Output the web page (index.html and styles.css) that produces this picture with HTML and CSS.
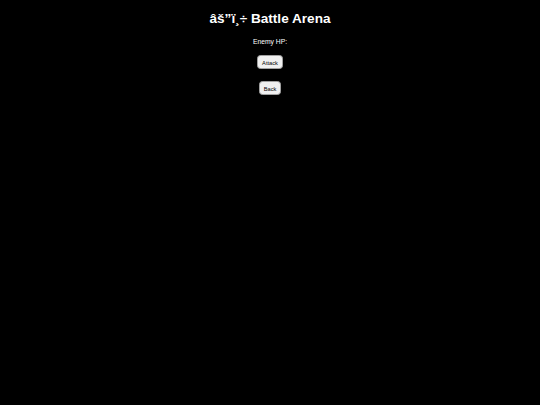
FILE: index.html
```html
<!DOCTYPE html>
<html>
<head>
<meta charset="utf-8">
<link rel="stylesheet" href="styles.css">
</head>
<body>
<main class="arena">
  <h1 class="title">âš”ï¸÷ Battle Arena</h1>
  <p class="hp">Enemy HP: </p>
  <button class="btn btn-attack">Attack</button>
  <button class="btn btn-back">Back</button>
</main>
</body>
</html>
```
FILE: styles.css
```css
html, body {
  margin: 0;
  padding: 0;
  background: #000;
  height: 100%;
}
.arena {
  display: flex;
  flex-direction: column;
  align-items: center;
  color: #fff;
  font-family: "Liberation Sans", Arial, sans-serif;
  padding-top: 11px;
}
.title {
  margin: 0;
  font-size: 13.6px;
  line-height: 16px;
  font-weight: bold;
}
.hp {
  margin: 11px 0 0;
  font-size: 6.75px;
  line-height: 8px;
}
.btn {
  font-family: "Liberation Sans", Arial, sans-serif;
  font-size: 5.7px;
  line-height: 7px;
  color: #000;
  background: #f0f0f0;
  border: 0.5px solid #a0a0a0;
  border-radius: 3.5px;
  padding: 3.5px 4px;
  height: 14px;
  box-sizing: border-box;
}
.btn-attack {
  margin-top: 9px;
}
.btn-back {
  margin-top: 12px;
}
```
